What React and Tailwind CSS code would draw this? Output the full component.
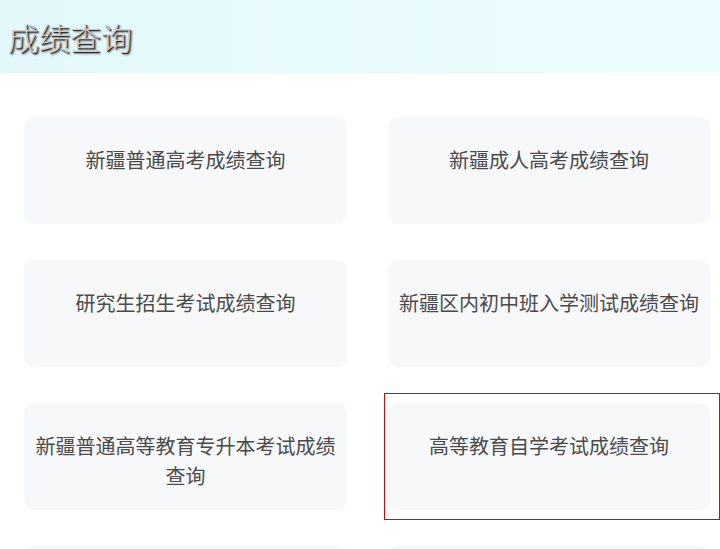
const items = [
  "新疆普通高考成绩查询",
  "新疆成人高考成绩查询",
  "研究生招生考试成绩查询",
  "新疆区内初中班入学测试成绩查询",
  "新疆普通高等教育专升本考试成绩查询",
  "高等教育自学考试成绩查询",
  "",
  "",
];

function Card({ label, selected }) {
  return (
    <div className="relative">
      {selected && (
        <div className="absolute -left-[4px] -top-[10px] -right-[10px] -bottom-[10px] border border-[#e60000]" />
      )}
      <div className="flex h-[107px] justify-center rounded-[10px] bg-[#f7f8fa] px-[10px] pt-[28px] text-center text-[20px] leading-[30px] text-[#4a4a4a]">
        {label}
      </div>
    </div>
  );
}

export default function App() {
  return (
    <div
      className="h-[549px] overflow-hidden bg-white"
      style={{ fontFamily: '"Noto Sans CJK SC", "Noto Sans", sans-serif' }}
    >
      <header className="flex h-[73px] items-center bg-gradient-to-r from-[#e4f8fb] to-[#ecfdff] pl-[8px]">
        <h1 className="text-[31px] font-light leading-none text-[#cfcfcf] [text-shadow:1px_1px_1px_#111,2px_2px_2px_rgba(0,0,0,0.5)]">
          成绩查询
        </h1>
      </header>
      <main className="grid grid-cols-[323px_322px] gap-x-[41px] gap-y-[36px] pl-[24px] pt-[44px]">
        {items.map((label, i) => (
          <Card key={i} label={label} selected={i === 5} />
        ))}
      </main>
    </div>
  );
}
